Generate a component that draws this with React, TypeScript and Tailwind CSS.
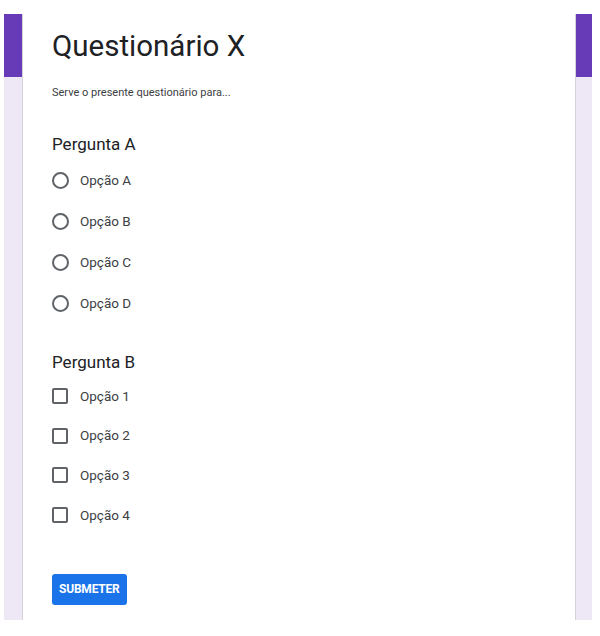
import React from 'react';

const radios = ['Opção A', 'Opção B', 'Opção C', 'Opção D'];
const checks = ['Opção 1', 'Opção 2', 'Opção 3', 'Opção 4'];

const SideStrip: React.FC<{ side: 'left' | 'right' }> = ({ side }) => (
  <div className={`flex flex-col ${side === 'left' ? 'w-[18px]' : 'w-[16px]'}`}>
    <div className="h-[63px] bg-[#673ab7]" />
    <div className="flex-1 bg-[#ede7f6]" />
  </div>
);

export default function App() {
  return (
    <div className="w-[600px] h-[636px] bg-white pt-[14px] pl-[4px] font-['Roboto',sans-serif]">
      <div className="flex h-[606px]">
        <SideStrip side="left" />
        <div className="w-[554px] bg-white border-x border-[#d6d3dc] pt-[14px] pl-[29px] pb-[15px] flex flex-col">
          <h1 className="text-[29.5px] leading-[36px] text-[#202124]">Questionário X</h1>
          <p className="mt-[21px] text-[11px] leading-[16px] text-[#3c4043]">Serve o presente questionário para...</p>

          <h2 className="mt-[31px] text-[17px] leading-[24px] text-[#202124]">Pergunta A</h2>
          <div className="mt-[4px] flex flex-col">
            {radios.map((r) => (
              <label key={r} className="h-[41px] flex items-center gap-[11px]">
                <span className="w-[17px] h-[17px] rounded-full border-2 border-[#5f6368]" />
                <span className="text-[13.5px] text-[#3c4043]">{r}</span>
              </label>
            ))}
          </div>

          <h2 className="mt-[26px] text-[17px] leading-[24px] text-[#202124]">Pergunta B</h2>
          <div className="mt-[2px] flex flex-col">
            {checks.map((c) => (
              <label key={c} className="h-[39.7px] flex items-center gap-[12px]">
                <span className="w-[16px] h-[16px] rounded-[2px] border-2 border-[#5f6368]" />
                <span className="text-[13.5px] text-[#3c4043]">{c}</span>
              </label>
            ))}
          </div>

          <div className="mt-[39px]">
            <button className="h-[31px] px-[7px] rounded-[3px] bg-[#1a73e8] text-white text-[12px] font-bold tracking-[-0.2px]">
              SUBMETER
            </button>
          </div>
        </div>
        <SideStrip side="right" />
      </div>
    </div>
  );
}
